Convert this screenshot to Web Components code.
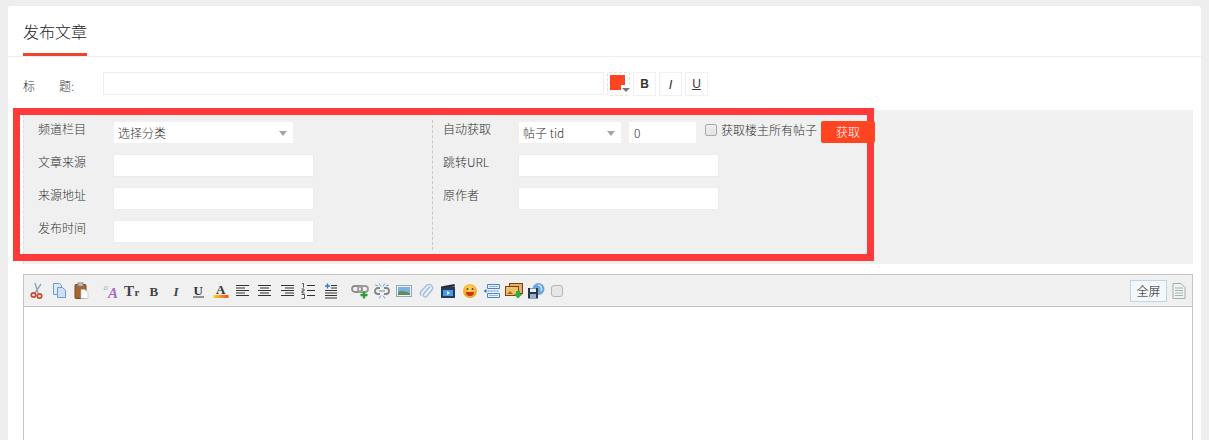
<!DOCTYPE html>
<html lang="zh"><head><meta charset="utf-8"><title>发布文章</title>
<style>
html,body{margin:0;height:440px;overflow:hidden;background:#eee}
body{padding:6px 8px 0;box-sizing:border-box;font:300 12px "Noto Sans CJK SC","Liberation Sans",sans-serif;color:#333}
</style></head><body>
<article-card>
  <tab-header>发布文章</tab-header>
  <title-row></title-row>
  <meta-panel></meta-panel>
  <editor-box></editor-box>
</article-card>
<script>
function def(name, css, html, init){
  customElements.define(name, class extends HTMLElement{
    constructor(){super();const r=this.attachShadow({mode:'open'});
      r.innerHTML='<style>'+css+'</style>'+html;}
    connectedCallback(){ if(init) init(this); }
  });
}
def('article-card',':host{display:block;background:#fff;border-radius:3px 3px 0 0;height:434px;overflow:hidden}','<slot></slot>');
def('tab-header',
 ':host{display:block;height:50px;border-bottom:1px solid #eee;padding:0 15px}'+
 'span{display:inline-block;height:47px;line-height:50px;border-bottom:3px solid #f4412a;font-size:16px;color:#222}',
 '<span><slot></slot></span>');
def('fmt-btn',
 ':host{display:flex;align-items:center;justify-content:center;width:23px;height:24px;box-sizing:border-box;border:1px solid #f0f0f6;font:12px "Liberation Sans",sans-serif;color:#333}',
 '<slot></slot>');
def('color-btn',
 ':host{display:block;position:relative;width:23px;height:24px;box-sizing:border-box;border:1px dashed #f6d9cf;border-radius:2px}'+
 'i{position:absolute;left:2px;top:2px;width:15px;height:15px;background:#ff4422}'+
 'b{position:absolute;left:13px;top:12px;width:9px;height:9px;background:#fff}'+
 'u{position:absolute;left:14px;top:15px;border:4px solid transparent;border-top-color:#777;border-bottom:0}',
 '<i></i><b></b><u></u>');
def('title-row',
 ':host{display:flex;align-items:flex-start;height:24px;padding:15px 0 14px 15px;color:#333}'+
 '.l{width:80px;display:flex;line-height:27px}.l span:first-child{width:36px}'+
 '.inp{width:501px;height:23px;box-sizing:border-box;border:1px solid #eee;margin-right:3px}'+
 '.g{display:flex;gap:3px}',
 '<div class="l"><span>标</span><span>题:</span></div><div class="inp"></div>'+
 '<div class="g"><color-btn></color-btn><fmt-btn><b>B</b></fmt-btn><fmt-btn><i style="font-size:13px">I</i></fmt-btn><fmt-btn><u>U</u></fmt-btn></div>');
def('text-field',
 ':host{display:block;height:21px;width:199px;background:#fff;box-shadow:0 0 0 1px #ececec;color:#234;line-height:21px;padding-left:0;box-sizing:border-box}',
 '<slot></slot>');
def('select-field',
 ':host{display:block;position:relative;height:21px;width:179px;box-sizing:border-box;background:#fff;line-height:21px;padding-left:4px;color:#333}'+
 'i{position:absolute;right:6px;top:9px;border:4px solid transparent;border-top:5px solid #a5a5a5;border-bottom:0}',
 '<slot></slot><i></i>');
def('form-row',
 ':host{display:flex;height:21px;line-height:14px;color:#333}'+
 '.l{width:76px;flex:none}'+
 '.c{display:flex;align-items:flex-start}',
 '<div class="l"><slot name="label"></slot></div><div class="c"><slot></slot></div>');
def('check-box',
 ':host{display:block;width:12px;height:12px;box-sizing:border-box;border:1px solid #aaa;border-radius:2px;background:linear-gradient(#eee,#e4e4e4)}','');
def('action-btn',
 ':host{display:block;position:relative;z-index:5;flex:none;width:54px;height:22px;margin-top:-1px;line-height:22px;text-align:center;background:#ff4422;color:#fff;border-radius:2px}',
 '<slot></slot>');
def('meta-panel',
 ':host{display:block;position:relative;margin-left:15px;margin-right:8px;height:154px;box-sizing:border-box;background:#f0f0f0;border-left:1px dashed #ddd;padding-top:12px}'+
 '.cols{display:flex;height:132px}'+
 '.left{width:394px;padding-left:14px;box-sizing:border-box;display:flex;flex-direction:column;gap:12px}'+
 '.right{padding-left:10px;border-left:1px dashed #c8c8c8;margin-top:-2px;height:128px;padding-top:2px;margin-left:14px;display:flex;flex-direction:column;gap:12px}'+
 '.note{position:absolute;z-index:2;left:-11px;top:-2px;width:861px;height:153px;box-sizing:border-box;border:7px solid #ff3939;pointer-events:none}'+
 '.first{height:21px;display:flex;align-items:flex-start}'+
 '.chk{display:flex;align-items:center;height:16px;margin-left:9px;gap:4px;white-space:nowrap}',
 '<div class="cols"><div class="left">'+
 '<form-row><span slot="label">频道栏目</span><select-field>选择分类</select-field></form-row>'+
 '<form-row><span slot="label">文章来源</span><text-field></text-field></form-row>'+
 '<form-row><span slot="label">来源地址</span><text-field></text-field></form-row>'+
 '<form-row><span slot="label">发布时间</span><text-field></text-field></form-row>'+
 '</div><div class="right">'+
 '<form-row><span slot="label">自动获取</span><div class="first">'+
 '<select-field style="width:102px">帖子 tid</select-field>'+
 '<text-field style="width:67px;margin-left:8px;box-shadow:none;padding-left:5px">0</text-field>'+
 '<div class="chk"><check-box></check-box><span>获取楼主所有帖子</span></div>'+
 '<action-btn style="margin-left:4px">获取</action-btn></div></form-row>'+
 '<form-row><span slot="label">跳转URL</span><text-field></text-field></form-row>'+
 '<form-row><span slot="label">原作者</span><text-field></text-field></form-row>'+
 '</div></div><div class="note"></div>');
const S='<svg width="18" height="18" viewBox="0 0 18 18" xmlns="http://www.w3.org/2000/svg">';
const lines=(xs,n=5,step=2.5,c='#333')=>{let o='';for(let i=0;i<n;i++){const [a,b]=xs[i%xs.length];o+=`<path d="M${a} ${3.5+i*step}H${b}" stroke="${c}" stroke-width="1"/>`}return o};
const serif=(t,x,y,sz,c,extra='')=>`<text x="${x}" y="${y}" font-family="Liberation Serif" font-size="${sz}" fill="${c}" ${extra}>${t}</text>`;
const ICONS={
 cut:'<path d="M6 11L12 2M9 11L6 1" stroke="#8fa4bd" stroke-width="1.4" fill="none"/><circle cx="4.5" cy="13" r="2.2" fill="none" stroke="#c9472c" stroke-width="1.7"/><circle cx="10.5" cy="14" r="2.2" fill="none" stroke="#c9472c" stroke-width="1.7"/>',
 copy:'<path d="M2.5 1.5h6l2 2v9h-8z" fill="#dfeaf7" stroke="#6d9bd4"/><path d="M6.5 5.5h5l3 3v7h-8z" fill="#cfe0f4" stroke="#6d9bd4"/>',
 paste:'<rect x="2" y="2.5" width="11" height="14" rx="1" fill="#a8632f" stroke="#7d4a25"/><rect x="5" y="1" width="5" height="3" fill="#c9c9c9" stroke="#888"/><path d="M8 7.5h4l3 3v6H8z" fill="#fff" stroke="#bbb" stroke-width=".7"/>',
 font:serif('a',1.5,8,9,'#8fb6de','font-style="italic"')+serif('A',6,15.5,15,'#a46fc4','font-style="italic" font-weight="bold"'),
 size:serif('T',0,14,15,'#444','font-weight="bold"')+serif('r',10.4,14,11,'#444','font-weight="bold"'),
 bold:serif('B',3.5,14,13,'#444','font-weight="bold"'),
 ital:serif('I',5.5,14,13,'#444','font-style="italic" font-weight="bold"'),
 under:serif('U',3.5,12.5,13,'#333','font-weight="bold"')+'<path d="M3 15h11" stroke="#333"/>',
 color:serif('A',4,11.5,13,'#333','font-weight="bold"')+'<defs><linearGradient id="g"><stop offset="0" stop-color="#ffcf20"/><stop offset="1" stop-color="#f2501a"/></linearGradient></defs><rect x="1.500" y="13" width="15" height="3" fill="url(#g)"/>',
 left:lines([[2,15],[2,11],[2,15],[2,11],[2,15]]),
 center:lines([[2,15],[4,13],[2,15],[4,13],[2,15]]),
 right:lines([[3,16],[7,16],[3,16],[7,16],[3,16]]),
 ol:'<path d="M7 3.500h8M7 8.500h8M7 13.500h8" stroke="#333"/><path d="M2 1.500h1.500v4M1.500 7h2.500v2H2v2h2.500M1.500 12.500h3v4h-3" stroke="#444" fill="none" stroke-width=".9"/>',
 indent:'<path d="M3 8.500h12M3 11h12M3 13.500h12M3 16h12M9 3.500h6M9 6h6" stroke="#333"/><path d="M5.500 1.500v5M3 4h5" stroke="#3a7bc8" stroke-width="1.500"/>',
 link:'<rect x="1" y="4" width="10" height="6" rx="3" fill="none" stroke="#8d8d8d" stroke-width="1.800"/><rect x="7" y="4" width="10" height="6" rx="3" fill="none" stroke="#9b9b9b" stroke-width="1.800"/><path d="M13 9.500v7M9.500 13h7" stroke="#25a232" stroke-width="2.400"/>',
 unlink:'<path d="M7 6H5a3 3 0 0 0 0 6h2M11 6h2a3 3 0 0 1 0 6h-2" fill="none" stroke="#868686" stroke-width="1.800"/><path d="M6 9h6" stroke="#888"/><path d="M6 1.500l2 3M12 1.500l-2 3M6 16.500l2-3M12 16.500l-2-3M2 3l3 1M16 3l-3 1" stroke="#6ea4de"/>',
 image:'<rect x="1.500" y="3.500" width="15" height="11" fill="#eef3f8" stroke="#8fa8bf"/><rect x="3" y="5" width="12" height="8" fill="#7fb0e2"/><path d="M3 10c3-2 6-1 12 1v2H3z" fill="#5c8f5c"/>',
 attach:'<path d="M13.500 5L7 12.500a2 2 0 0 0 3 2.500l5-6a3.500 3.500 0 0 0-5-5L4 10.500a5 5 0 0 0 .500 3.500" fill="none" stroke="#9fbfe3" stroke-width="1.500" transform="translate(-.5 -.5)"/>',
 media:'<rect x="2" y="5" width="14" height="11" fill="#1e3c63"/><rect x="4" y="8" width="10" height="6" fill="#4f98e0"/><path d="M2 4.500L15.500 2l.5 2.500L2.500 6z" fill="#2a2a2a"/><path d="M8 9l3 2-3 2z" fill="#fff"/>',
 smile:'<defs><radialGradient id="s" cx=".5" cy=".35" r=".7"><stop offset="0" stop-color="#ffd95c"/><stop offset="1" stop-color="#ee9a14"/></radialGradient></defs><circle cx="9" cy="9" r="7" fill="url(#s)"/><circle cx="6.500" cy="7" r="1" fill="#6b3b10"/><circle cx="11.500" cy="7" r="1" fill="#6b3b10"/><path d="M5 10h8a4 4 0 0 1-8 0z" fill="#c6321a"/>',
 pagebreak:'<path d="M4.500 2.500h12v4h-12zM4.500 11.500h12v4h-12z" fill="#eaf2fb" stroke="#4d85c4"/><path d="M0.500 9l3-2v4z" fill="#2f74c0"/><path d="M4.500 9h12" stroke="#4d85c4" stroke-dasharray="2 1"/><path d="M6 4.500h9M6 13.500h9" stroke="#8fb6de"/>',
 tpl:'<rect x="4.500" y="1.500" width="13" height="10" fill="#dcb36a" stroke="#8a3b12"/><rect x="0.500" y="4.500" width="13" height="9" fill="#eec26a" stroke="#8a3b12"/><path d="M2 12l3-3 3 3" fill="#a5682a"/><path d="M11 9h4v3h2.500l-4.500 4.500L8.500 12H11z" fill="#2fae3a"/>',
 save:'<circle cx="11.500" cy="7" r="6" fill="#6aa6e4"/><path d="M11 3a4 4 0 0 1 3 6" fill="none" stroke="#cfe3f8" stroke-width="1.500"/><path d="M1 6h10v10.500H1z" fill="#26384d"/><rect x="3" y="6.500" width="6" height="3.500" fill="#e8eef5"/><rect x="3" y="12" width="6" height="4.500" fill="#9ab0c8"/>',
 doc:'<path d="M3 1.500h8l4 4v11H3z" fill="#f0f3f2" stroke="#9fb0aa"/><path d="M5 6h8M5 8.500h8M5 11h8M5 13.500h8" stroke="#a4b2ad"/>'
};
def('tb-icon',':host{display:flex;width:22px;height:22px;align-items:center;justify-content:center;flex:none}svg{display:block}','<span id="h" style="display:block"></span>',
 el=>{el.shadowRoot.getElementById('h').innerHTML=S+(ICONS[el.getAttribute('name')]||'')+'</svg>';});
def('full-btn',':host{display:block;width:37px;height:22px;box-sizing:border-box;border:1px solid #bcd6e8;background:#f5f8fa;line-height:20px;text-align:center;font-size:12px;color:#111}','<slot></slot>');
def('editor-box',
 ':host{display:block;margin:10px 8px 0 15px;height:200px;box-sizing:border-box;border:1px solid #c4c4c4;background:#fff}'+
 '.bar{display:flex;align-items:center;height:31px;background:#f0f0f0;border-bottom:1px solid #c4c4c4;padding-left:3px}'+
 '.gap{width:7px;flex:none}.sp{flex:1}'+
 '.cb{margin-left:4px;width:10px;height:10px;border:1px solid #b5b5b5;border-radius:3px;background:#e6e6e6;box-sizing:content-box}',
 '<div class="bar">'+
 ['cut','copy','paste',0,'font','size','bold','ital','under','color','left','center','right','ol','indent',0,'link','unlink','image','attach','media','smile','pagebreak','tpl','save'].map(n=>n?`<tb-icon name="${n}"></tb-icon>`:'<span class="gap"></span>').join('')+
 '<span class="cb"></span><span class="sp"></span><full-btn>全屏</full-btn><tb-icon name="doc" style="margin:0 2px 0 1px"></tb-icon></div>');
</script>
</body></html>
